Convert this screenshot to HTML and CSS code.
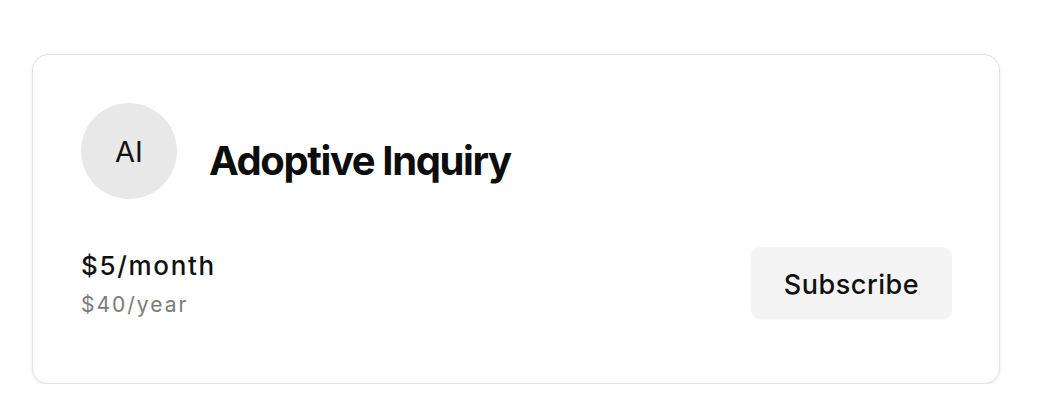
FILE: index.html
```html
<!DOCTYPE html>
<html>
<head>
<meta charset="utf-8">
<link rel="stylesheet" href="styles.css">
</head>
<body>
<div class="card">
  <div class="header">
    <div class="avatar">AI</div>
    <h1 class="title">Adoptive Inquiry</h1>
  </div>
  <div class="plan">
    <div class="prices">
      <div class="monthly">$5/month</div>
      <div class="yearly">$40/year</div>
    </div>
    <button class="subscribe">Subscribe</button>
  </div>
</div>
</body>
</html>
```

FILE: styles.css
```css
html, body {
  margin: 0;
  padding: 0;
  background: #ffffff;
}
body {
  font-family: Inter, "Noto Sans", sans-serif;
  color: #111111;
  padding: 54px 0 0 32px;
}
.card {
  box-sizing: border-box;
  width: 968px;
  height: 330px;
  border: 1px solid #e3e3e3;
  border-radius: 16px;
  box-shadow: 0 2px 4px rgba(0,0,0,0.08);
  padding: 48px 47px 48px 48px;
  background: #fff;
}
.header {
  display: flex;
  align-items: center;
  gap: 32px;
}
.avatar {
  width: 96px;
  height: 96px;
  border-radius: 50%;
  background: #e8e8e8;
  display: flex;
  align-items: center;
  justify-content: center;
  font-size: 29px;
  font-weight: 400;
  color: #111;
}
.title {
  margin: 0;
  padding-top: 18px;
  font-size: 40px;
  font-weight: 700;
  letter-spacing: -0.035em;
  color: #0d0d0d;
}
.plan {
  margin-top: 48px;
  display: flex;
  justify-content: space-between;
  align-items: flex-start;
}
.prices {
  padding-top: 2px;
}
.monthly {
  font-size: 26px;
  line-height: 33px;
  font-weight: 500;
  letter-spacing: 0.065em;
}
.yearly {
  font-size: 21px;
  line-height: 28px;
  color: #7b7b7b;
  margin-top: 9px;
  letter-spacing: 0.095em;
}
.subscribe {
  font-family: inherit;
  width: 201px;
  height: 72px;
  border: none;
  border-radius: 10px;
  background: #f4f4f4;
  font-size: 27px;
  font-weight: 500;
  letter-spacing: 0.02em;
  color: #111;
  padding: 2px 0 0;
  box-shadow: 0 1px 2px rgba(0,0,0,0.04);
}
```
